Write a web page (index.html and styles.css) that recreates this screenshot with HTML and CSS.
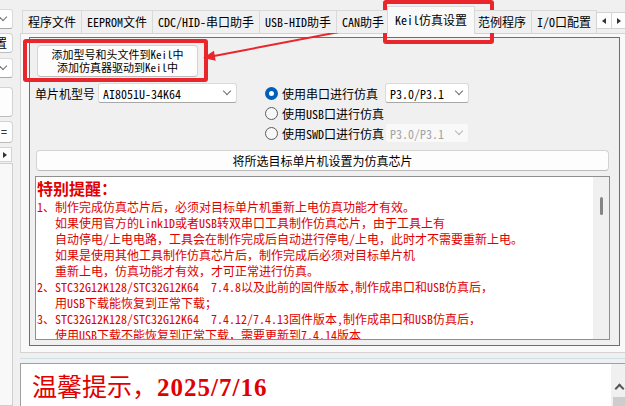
FILE: index.html
```html
<!DOCTYPE html>
<html lang="zh-CN">
<head>
  <meta charset="UTF-8" />
  <title>Keil仿真设置</title>
  <link rel="stylesheet" href="styles.css">
</head>
<body>
  <div class="app">
    <!-- clipped widgets of the left pane -->
    <div class="side">
      <div class="side-inner">
        <div class="combo side-combo"><span></span><span class="chev"></span></div>
        <div class="btn side-btn1">设置</div>
        <div class="combo side-combo2"><span></span><span class="chev"></span></div>
        <div class="btn side-btn2"></div>
        <div class="btn side-btn3">=</div>
        <div class="arrow-btn"><span class="tri-r"></span></div>
        <div class="side-panel"></div>
      </div>
    </div>

    <div class="main">
      <div class="tabbar">
        <div class="tabs">
          <div class="tab">程序文件</div>
          <div class="tab">EEPROM文件</div>
          <div class="tab">CDC/HID-串口助手</div>
          <div class="tab">USB-HID助手</div>
          <div class="tab">CAN助手</div>
          <div class="tab active">Keil仿真设置</div>
          <div class="tab">范例程序</div>
          <div class="tab">I/O口配置</div>
        </div>
        <div class="tab-scroll">
          <div class="scroll-btn"><span class="tri-l"></span></div>
          <div class="scroll-btn"><span class="tri-r"></span></div>
        </div>
      </div>

      <div class="tab-panel">
        <div class="group">
          <button class="btn keil-btn">添加型号和头文件到Keil中<br>添加仿真器驱动到Keil中</button>

          <div class="config">
            <div class="mcu-row">
              <span class="mcu-label">单片机型号</span>
              <div class="combo mcu-combo"><span>AI8051U-34K64</span><span class="chev"></span></div>
            </div>
            <div class="radios">
              <div class="radio-row">
                <span class="radio checked"></span>
                <span class="radio-label">使用串口进行仿真</span>
                <div class="combo port"><span>P3.0/P3.1</span><span class="chev"></span></div>
              </div>
              <div class="radio-row">
                <span class="radio"></span>
                <span class="radio-label">使用USB口进行仿真</span>
              </div>
              <div class="radio-row">
                <span class="radio"></span>
                <span class="radio-label">使用SWD口进行仿真</span>
                <div class="combo port disabled"><span>P3.0/P3.1</span><span class="chev"></span></div>
              </div>
            </div>
          </div>

          <button class="btn wide-btn">将所选目标单片机设置为仿真芯片</button>

          <div class="memo">
            <div class="memo-text">
              <div class="memo-head">特别提醒：</div>
              <div class="line">1、制作完成仿真芯片后，必须对目标单片机重新上电仿真功能才有效。</div>
              <div class="line ind">如果使用官方的Link1D或者USB转双串口工具制作仿真芯片，由于工具上有</div>
              <div class="line ind">自动停电/上电电路，工具会在制作完成后自动进行停电/上电，此时才不需要重新上电。</div>
              <div class="line ind">如果是使用其他工具制作仿真芯片后，制作完成后必须对目标单片机</div>
              <div class="line ind">重新上电，仿真功能才有效，才可正常进行仿真。</div>
              <div class="line">2、STC32G12K128/STC32G12K64  7.4.8以及此前的固件版本,制作成串口和USB仿真后，</div>
              <div class="line ind">用USB下载能恢复到正常下载；</div>
              <div class="line">3、STC32G12K128/STC32G12K64  7.4.12/7.4.13固件版本,制作成串口和USB仿真后，</div>
              <div class="line ind">使用USB下载不能恢复到正常下载，需要更新到7.4.14版本</div>
            </div>
            <div class="memo-scroll"><div class="memo-thumb"></div></div>
          </div>
        </div>
      </div>

      <div class="splitter"></div>

      <div class="lower">
        <div class="lower-text">温馨提示，<span class="date">2025/7/16</span></div>
        <div class="vscroll">
          <span class="chev-up"></span>
          <span class="vthumb"></span>
        </div>
      </div>
    </div>
  </div>

  <!-- red annotation drawn over the window -->
  <svg class="annot" width="625" height="406" viewBox="0 0 625 406">
    <rect x="25" y="41" width="181" height="39" rx="1" fill="none" stroke="#e8262b" stroke-width="4"/>
    <rect x="385" y="2" width="107" height="40" rx="1" fill="none" stroke="#e8262b" stroke-width="4"/>
    <line x1="402" y1="20" x2="214" y2="56" stroke="#e8262b" stroke-width="2"/>
    <polygon points="203,58 215.7,60.7 213.9,50.8" fill="#e8262b"/>
  </svg>
</body>
</html>
```

FILE: styles.css
```css
* {
  box-sizing: border-box;
  margin: 0;
  padding: 0;
}

body {
  background: #f0f0f0;
  color: #000;
  font-family: "Noto Sans Mono CJK SC", "Noto Sans CJK SC", sans-serif;
  font-size: 12px;
  overflow: hidden;
}

.app {
  display: flex;
  height: 406px;
}

/* left pane, only its right edge is visible */
.side {
  width: 14px;
  flex-shrink: 0;
  overflow: hidden;
}

.side-inner {
  width: 60px;
  height: 100%;
  margin-left: -46px;
  display: flex;
  flex-direction: column;
}

.side-inner > div {
  margin-right: 1px;
}

.side-combo {
  margin-top: 9px;
}

.side-btn1 {
  height: 20px;
  margin-top: 4px;
  text-align: right;
  padding-right: 5px;
  line-height: 18px;
}

.side-combo2 {
  margin-top: 5px;
}

.side-btn2 {
  height: 30px;
  margin-top: 9px;
}

.side-btn3 {
  height: 22px;
  margin-top: 4px;
  text-align: right;
  padding-right: 5px;
  line-height: 20px;
}

.side-inner .arrow-btn {
  height: 15px;
  margin-top: 4px;
  margin-right: 2px;
  background: #fdfdfd;
  border: 1px solid #d4d4d4;
  display: flex;
  align-items: center;
  justify-content: flex-end;
  padding-right: 4px;
}

.side-panel {
  flex: 1;
  margin-top: 1px;
  background: #f8f8f8;
  border: 1px solid #cfcfcf;
}

/* common controls */
.combo {
  display: flex;
  align-items: center;
  justify-content: space-between;
  height: 20px;
  padding: 0 6px 0 4px;
  background: #fff;
  border: 1px solid #dadada;
  border-bottom-color: #a8a8a8;
  border-radius: 3px;
}

.chev {
  width: 6px;
  height: 6px;
  margin-top: -4px;
  border-right: 1px solid #707070;
  border-bottom: 1px solid #707070;
  transform: rotate(45deg);
}

.btn {
  background: #fdfdfd;
  border: 1px solid #d3d3d3;
  border-bottom-color: #bcbcbc;
  border-radius: 4px;
  font: inherit;
  color: #000;
}

.tri-r,
.tri-l {
  width: 0;
  height: 0;
  border-top: 3px solid transparent;
  border-bottom: 3px solid transparent;
}

.tri-r {
  border-left: 4px solid #333;
}

.tri-l {
  border-right: 4px solid #333;
}

/* tab control */
.main {
  flex: 1;
  margin-left: 6px;
  display: flex;
  flex-direction: column;
}

.tabbar {
  display: flex;
  height: 34px;
  margin-bottom: -1px;
  position: relative;
  z-index: 1;
}

.tabs {
  flex: 1;
  display: flex;
  align-items: flex-end;
  padding-left: 2px;
  overflow: hidden;
}

.tab {
  flex-shrink: 0;
  height: 23px;
  margin-bottom: 1px;
  margin-left: -1px;
  padding: 0 5px;
  line-height: 22px;
  white-space: nowrap;
  background: #f0f0f0;
  border: 1px solid #d9d9d9;
  border-bottom: none;
}

.tab:first-child {
  margin-left: 0;
}

.tab.active {
  height: 28px;
  margin: 0 -2px 0 -3px;
  padding: 0 7px;
  line-height: 25px;
  background: #f9f9f9;
  position: relative;
  z-index: 1;
}

.tab-scroll {
  display: flex;
  margin-top: 12px;
  margin-right: 1px;
  align-self: flex-start;
}

.scroll-btn {
  width: 16px;
  height: 17px;
  margin-left: -1px;
  display: flex;
  align-items: center;
  justify-content: center;
  background: #fdfdfd;
  border: 1px solid #d4d4d4;
}

.tab-panel {
  height: 320px;
  margin-right: 2px;
  padding: 3px 5px 6px 8px;
  background: #f9f9f9;
  border: 1px solid #d4d4d4;
}

.group {
  height: 100%;
  display: flex;
  flex-direction: column;
  align-items: flex-start;
  background: #f0f0f0;
  border: 1px solid #6e6e6e;
}

.keil-btn {
  width: 161px;
  height: 32px;
  margin: 7px 0 0 7px;
  font-size: 11px;
  line-height: 13px;
}

.config {
  display: flex;
  margin: 6px 0 0 5px;
}

.mcu-row {
  display: flex;
  align-items: center;
  height: 20px;
}

.mcu-label {
  width: 63px;
}

.mcu-combo {
  width: 139px;
}

.radios {
  margin-left: 28px;
  display: flex;
  flex-direction: column;
}

.radio-row {
  display: flex;
  align-items: center;
  height: 20px;
}

.radio {
  width: 13px;
  height: 13px;
  border-radius: 50%;
  border: 1px solid #5c5c5c;
  background: #f7f7f7;
  margin-right: 4px;
}

.radio.checked {
  border: 4px solid #005fb8;
  background: #fff;
}

.radio-label {
  width: 103px;
}

.port {
  width: 84px;
}

.port.disabled {
  color: #a3a3a3;
  background: #f9f9f9;
  border-color: #f0f0f0;
}

.port.disabled .chev {
  border-color: #b5b5b5;
}

.wide-btn {
  width: 573px;
  height: 21px;
  margin: 7px 0 0 6px;
}

/* red notes box */
.memo {
  width: 575px;
  height: 164px;
  margin: 5px 0 0 5px;
  display: flex;
  background: #fff;
  border: 1px solid #8f8f8f;
}

.memo-text {
  flex: 1;
  padding-left: 1px;
  overflow: hidden;
  color: #e00000;
}

.memo-head {
  font-size: 16px;
  font-weight: bold;
  line-height: 22px;
}

.line {
  line-height: 16px;
  white-space: pre;
}

.ind {
  padding-left: 18px;
}

.memo-scroll {
  width: 16px;
  background: #f0f0f0;
  padding: 20px 0 0 7px;
}

.memo-thumb {
  width: 3px;
  height: 18px;
  border-radius: 2px;
  background: #858585;
}

/* splitter and bottom pane */
.splitter {
  height: 6px;
  border-bottom: 1px solid #cde0ea;
  margin-bottom: 4px;
}

.lower {
  flex: 1;
  display: flex;
  background: #fff;
  border-top: 1px solid #a0a0a0;
  border-left: 1px solid #a0a0a0;
}

.lower-text {
  flex: 1;
  padding: 9px 0 0 11px;
  font-family: "Liberation Serif", "Noto Sans CJK SC", serif;
  font-size: 25px;
  line-height: 30px;
  color: #e00000;
}

.date {
  font-weight: bold;
  letter-spacing: 1px;
}

.vscroll {
  width: 17px;
  background: #f0f0f0;
  display: flex;
  flex-direction: column;
  align-items: center;
}

.chev-up {
  width: 7px;
  height: 7px;
  margin-top: 21px;
  border-left: 2px solid #555;
  border-top: 2px solid #555;
  transform: rotate(45deg);
}

.vthumb {
  width: 14px;
  flex: 1;
  margin-top: 5px;
  background: #cdcdcd;
}

.annot {
  position: absolute;
  top: 0;
  left: 0;
  pointer-events: none;
}
```
